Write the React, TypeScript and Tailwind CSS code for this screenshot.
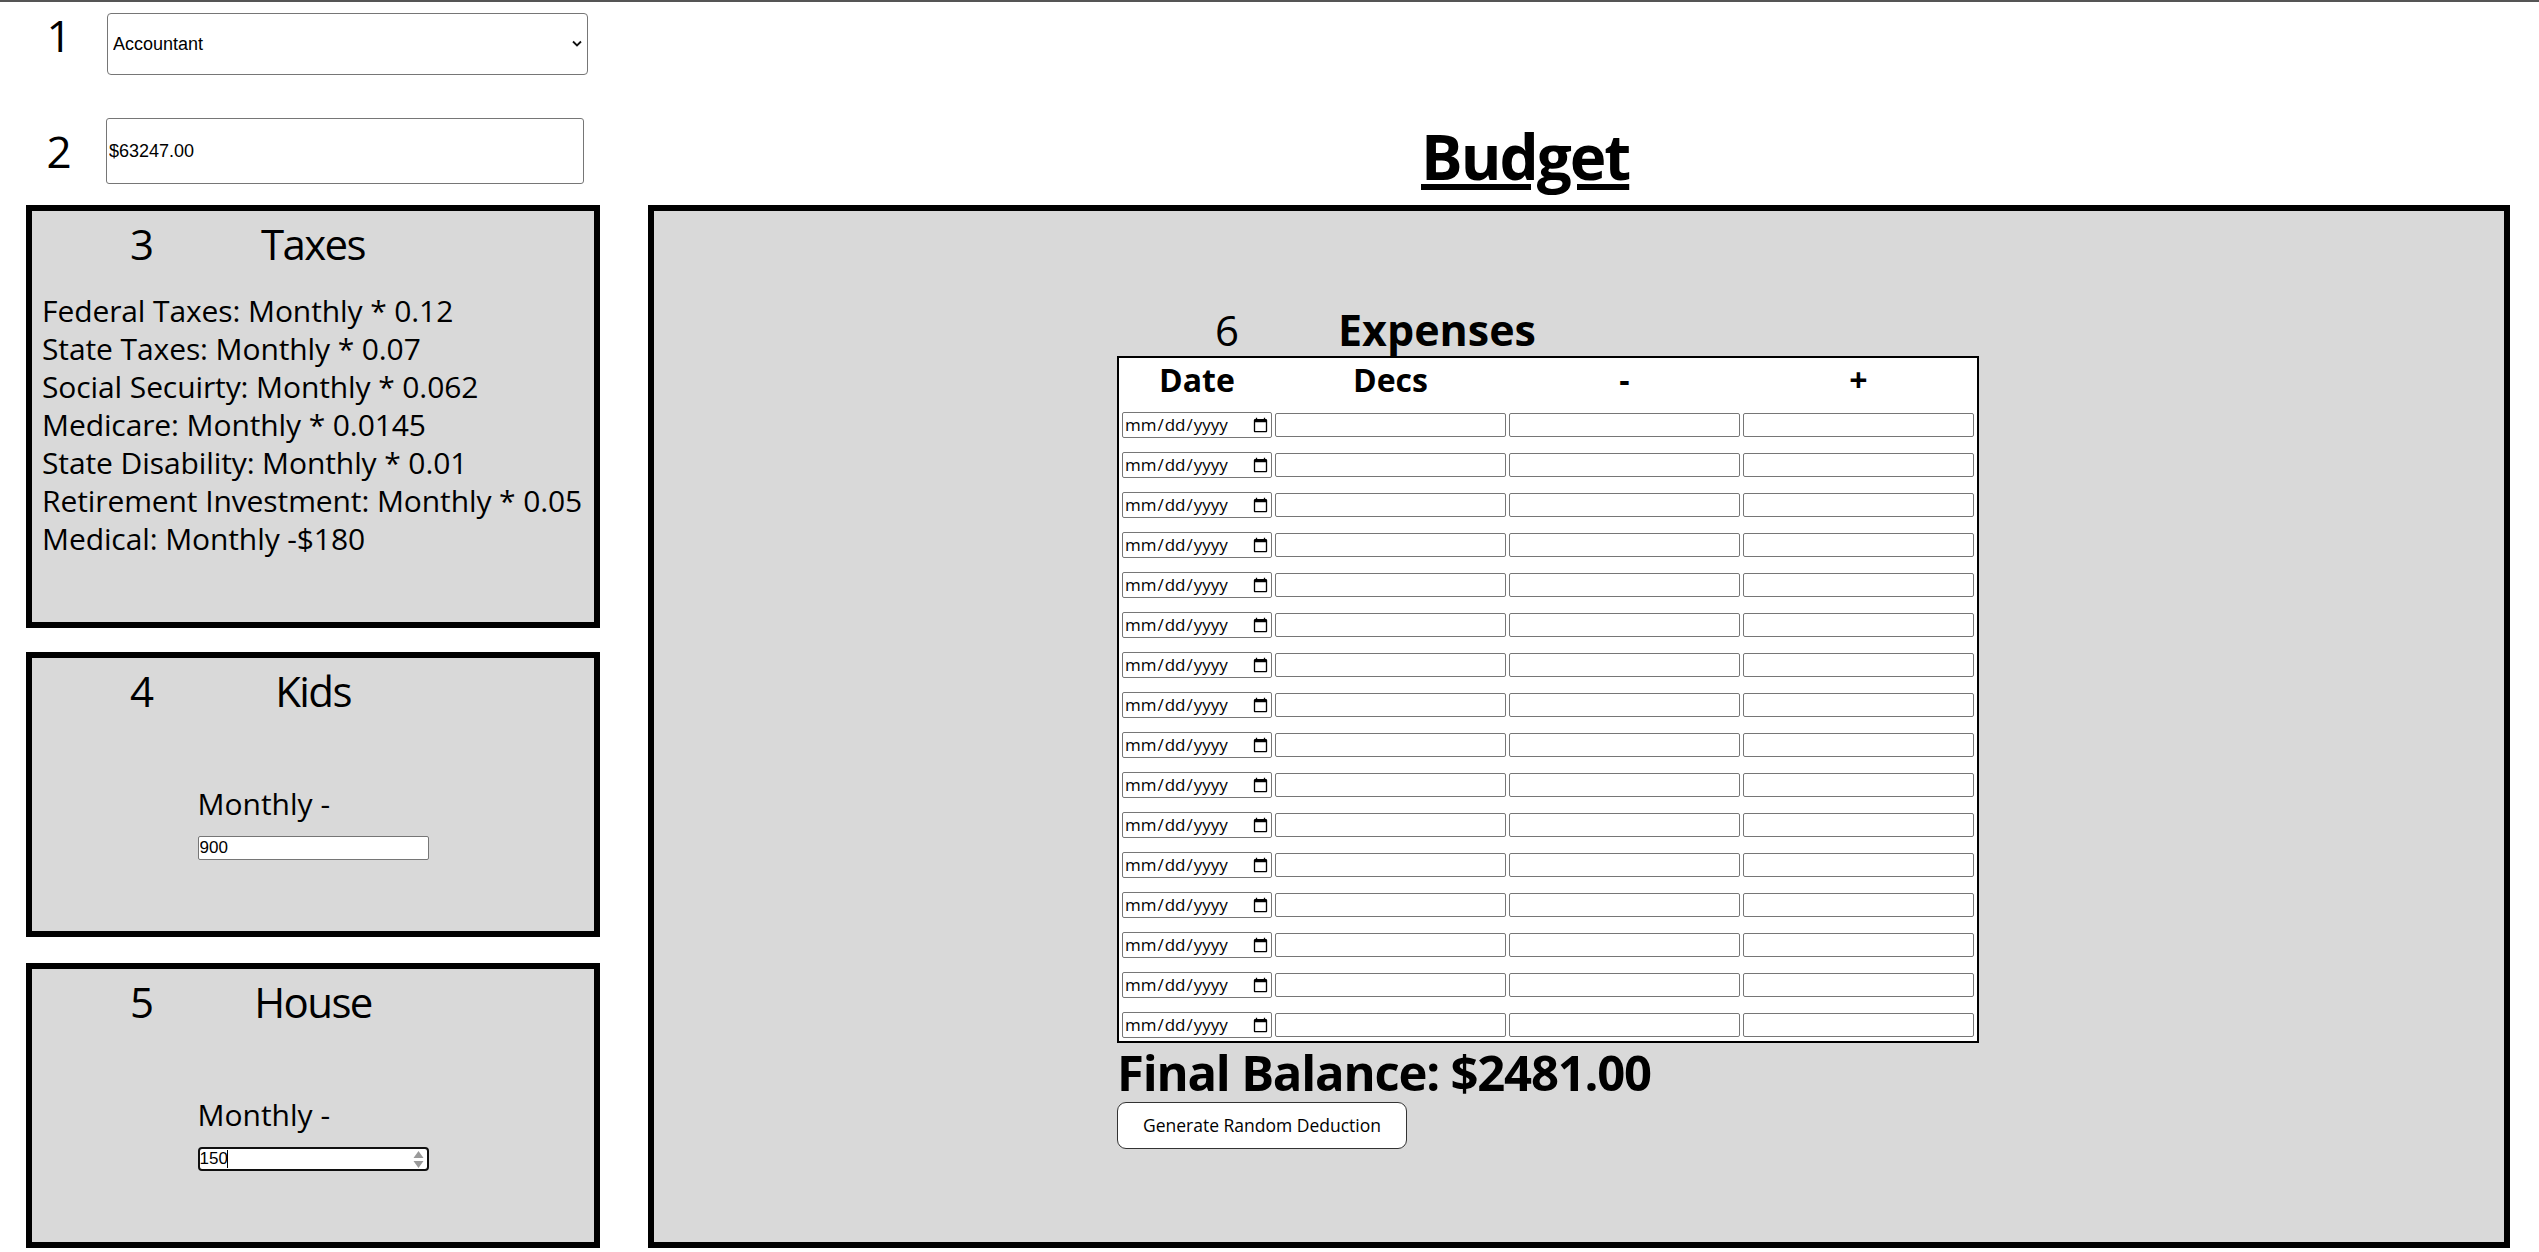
import React from "react";

function Chevron() {
  return (
    <svg
      className="pointer-events-none absolute right-[6px] top-[27px]"
      width="10"
      height="7"
      viewBox="0 0 10 7"
      fill="none"
    >
      <path d="M1 1.5L5 5.5L9 1.5" stroke="#111" strokeWidth="1.8" />
    </svg>
  );
}

function SectionHead({ n, title }: { n: string; title: string }) {
  return (
    <div className="grid grid-cols-[220px_1fr_220px] pt-[8px] text-[42px] leading-[50px]">
      <div className="text-center">{n}</div>
      <div className="text-center whitespace-nowrap tracking-[-1.6px]">{title}</div>
      <div />
    </div>
  );
}

export default function App() {
  const rows = Array.from({ length: 16 }, (_, i) => i);
  const taxes = [
    "Federal Taxes: Monthly * 0.12",
    "State Taxes: Monthly * 0.07",
    "Social Secuirty: Monthly * 0.062",
    "Medicare: Monthly * 0.0145",
    "State Disability: Monthly * 0.01",
    "Retirement Investment: Monthly * 0.05",
    "Medical: Monthly -$180",
  ];
  return (
    <div className="w-[2539px] min-h-[1252px] bg-white border-t-2 border-[#555] font-['Open_Sans',sans-serif] text-black flex gap-[48px] pl-[26px] pr-[29px]">
      {/* Left column */}
      <div className="w-[574px] shrink-0 flex flex-col">
        <div className="flex items-start mt-[7px]">
          <div className="ml-[4px] w-[58px] text-center text-[44px] leading-[52px]">1</div>
          <div className="relative ml-[19px] mt-[4px]">
            <select
              defaultValue="Accountant"
              className="appearance-none block w-[481px] h-[62px] border border-[#767676] rounded-[4px] bg-white pl-[5px] font-['Liberation_Sans',Arial,sans-serif] text-[18px] text-black"
            >
              <option>Accountant</option>
              <option>Engineer</option>
              <option>Teacher</option>
            </select>
            <Chevron />
          </div>
        </div>
        <div className="flex items-center mt-[43px]">
          <div className="ml-[4px] w-[58px] text-center text-[44px] leading-[52px]">2</div>
          <input
            type="text"
            defaultValue="$63247.00"
            className="block ml-[18px] w-[478px] h-[66px] border border-[#767676] rounded-[3px] bg-white pl-[2px] font-['Liberation_Sans',Arial,sans-serif] text-[18px] text-black"
          />
        </div>

        <div className="mt-[21px] h-[423px] border-[6px] border-black bg-[#d9d9d9]">
          <SectionHead n="3" title="Taxes" />
          <div className="mt-[23px] pl-[10px] text-[30px] leading-[38px] tracking-[-0.1px]">
            {taxes.map((t) => (
              <div key={t} className="whitespace-nowrap">{t}</div>
            ))}
          </div>
        </div>

        <div className="mt-[24px] h-[285px] border-[6px] border-black bg-[#d9d9d9]">
          <SectionHead n="4" title="Kids" />
          <div className="mt-[69px] w-[231px] mx-auto">
            <div className="text-[30px] leading-[38px] whitespace-nowrap">Monthly -</div>
            <input
              type="text"
              defaultValue="900"
              className="block mt-[13px] w-[231px] h-[24px] border border-[#767676] rounded-[2px] bg-white pl-[1px] font-['Liberation_Sans',Arial,sans-serif] text-[17px] text-black"
            />
          </div>
        </div>

        <div className="mt-[26px] h-[285px] border-[6px] border-black bg-[#d9d9d9]">
          <SectionHead n="5" title="House" />
          <div className="mt-[69px] w-[231px] mx-auto">
            <div className="text-[30px] leading-[38px] whitespace-nowrap">Monthly -</div>
            <div className="relative mt-[13px]">
              <input
                type="text"
                defaultValue="150"
                className="block w-[231px] h-[24px] border-2 border-[#101010] rounded-[4px] bg-white pl-[0px] font-['Liberation_Sans',Arial,sans-serif] text-[17px] text-black"
              />
              <div className="absolute left-[29px] top-[3px] w-[1px] h-[18px] bg-black" />
              <svg className="absolute right-[5px] top-[2px]" width="11" height="21" viewBox="0 0 11 21">
                <polygon points="0.5,9 5.5,2 10.5,9" fill="#9a9a9a" />
                <polygon points="0.5,12 5.5,19 10.5,12" fill="#9a9a9a" />
              </svg>
            </div>
          </div>
        </div>
      </div>

      {/* Right column */}
      <div className="flex-1 flex flex-col">
        <div className="pt-[109px] pl-[773px] text-[62px] leading-[90px] font-bold tracking-[-2px] underline decoration-[6px] underline-offset-[4px]">
          Budget
        </div>
        <div className="mt-[4px] h-[1043px] border-[6px] border-black bg-[#d9d9d9] pl-[463px] pt-[93px]">
          <div className="flex items-start text-[42px] leading-[52px]">
            <span className="ml-[98px]">6</span>
            <span className="ml-[99px] font-bold text-[43px]">Expenses</span>
          </div>
          <table className="border-2 border-black bg-white border-separate border-spacing-x-[3px] border-spacing-y-[2px]">
            <thead>
              <tr>
                <th className="p-0 h-[39px] text-[32px] leading-[39px] font-bold text-center">Date</th>
                <th className="p-0 h-[39px] text-[32px] leading-[39px] font-bold text-center">Decs</th>
                <th className="p-0 h-[39px] text-[32px] leading-[39px] font-bold text-center">-</th>
                <th className="p-0 h-[39px] text-[32px] leading-[39px] font-bold text-center">+</th>
              </tr>
            </thead>
            <tbody>
              {rows.map((r) => (
                <tr key={r}>
                  <td className="p-0 align-top">
                    <input
                      type="date"
                      className="block mt-[11px] mb-[1px] w-[150px] h-[26px] border border-[#767676] rounded-[2px] bg-white pl-[1px] font-['Open_Sans',sans-serif] text-[17px] text-black"
                    />
                  </td>
                  <td className="p-0 align-top">
                    <input type="text" className="block mt-[12px] mb-[2px] w-[231px] h-[24px] border border-[#767676] rounded-[2px] bg-white" />
                  </td>
                  <td className="p-0 align-top">
                    <input type="text" className="block mt-[12px] mb-[2px] w-[231px] h-[24px] border border-[#767676] rounded-[2px] bg-white" />
                  </td>
                  <td className="p-0 align-top">
                    <input type="text" className="block mt-[12px] mb-[2px] w-[231px] h-[24px] border border-[#767676] rounded-[2px] bg-white" />
                  </td>
                </tr>
              ))}
            </tbody>
          </table>
          <div className="text-[49px] leading-[59px] font-bold tracking-[-1.2px] whitespace-nowrap">Final Balance: $2481.00</div>
          <button className="block w-[290px] h-[47px] border border-[#333] rounded-[9px] bg-white text-[17.5px] text-black">
            Generate Random Deduction
          </button>
        </div>
      </div>
    </div>
  );
}
